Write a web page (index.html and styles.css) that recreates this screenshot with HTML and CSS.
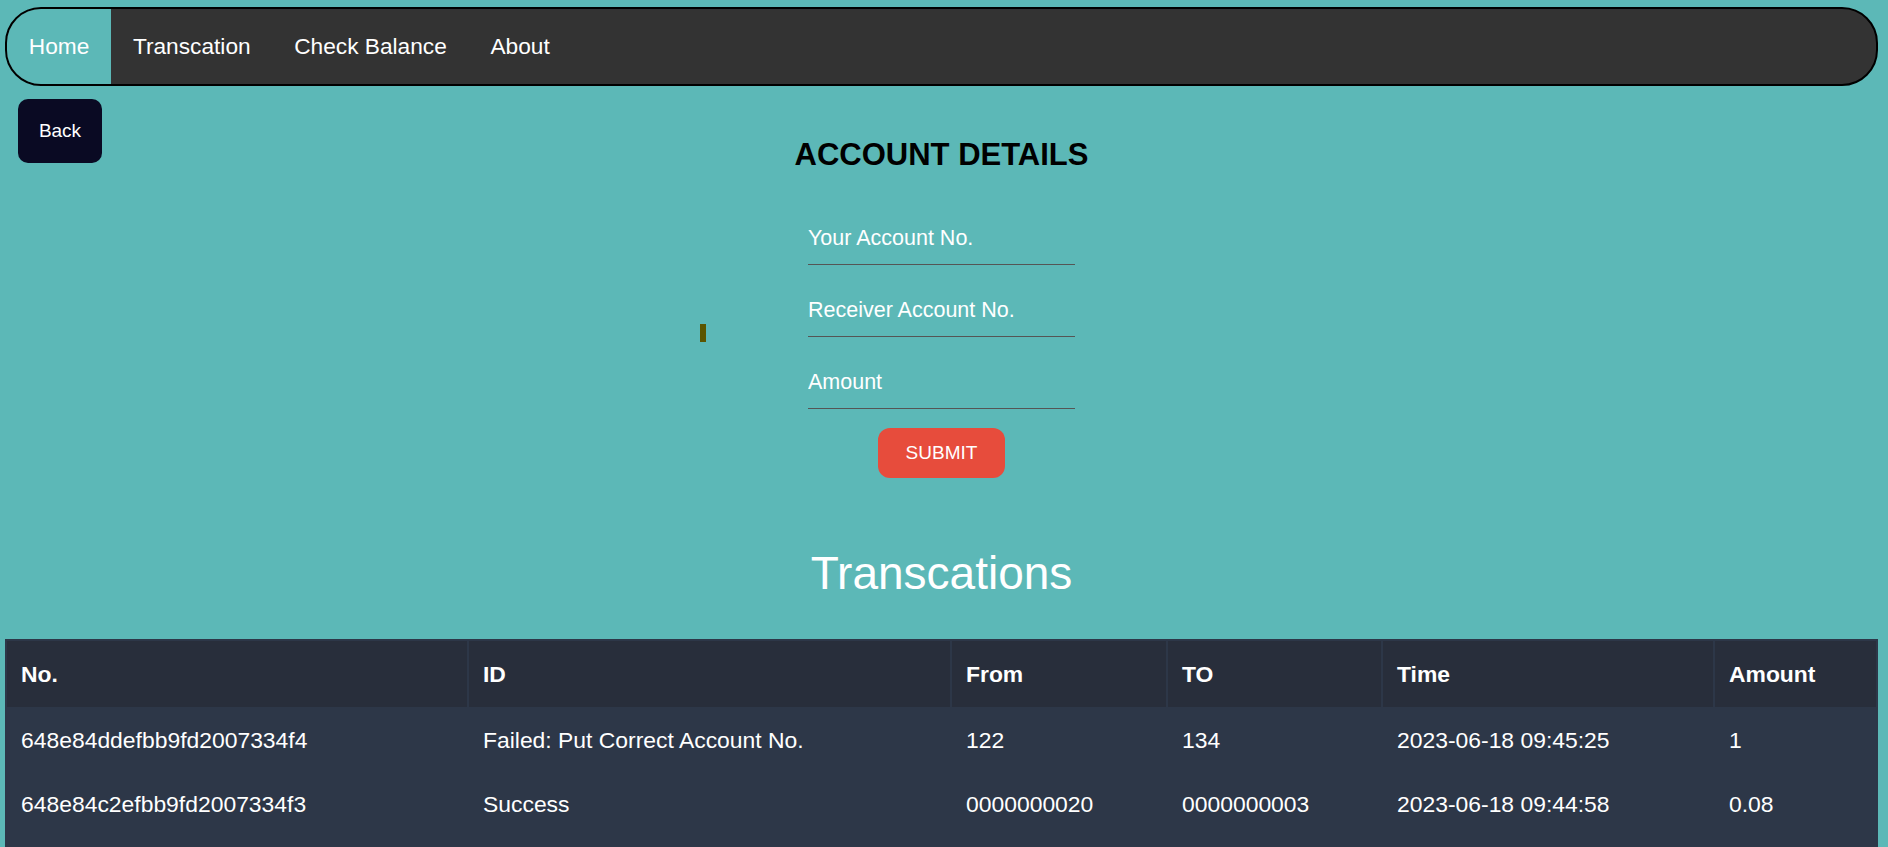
FILE: index.html
```html
<!DOCTYPE html>
<html lang="en">
<head>
<meta charset="utf-8">
<title>Bank</title>
<link rel="stylesheet" href="styles.css">
</head>
<body>
<div class="page">
  <nav class="navbar">
    <a class="nav-link active" href="#">Home</a>
    <a class="nav-link" href="#">Transcation</a>
    <a class="nav-link" href="#">Check Balance</a>
    <a class="nav-link" href="#">About</a>
  </nav>

  <div class="top">
    <button class="back">Back</button>
    <section class="transfer">
      <h2 class="transfer-title">ACCOUNT DETAILS</h2>
      <form class="transfer-form">
        <span class="marker"></span>
        <input class="field" type="text" placeholder="Your Account No.">
        <input class="field" type="text" placeholder="Receiver Account No.">
        <input class="field" type="text" placeholder="Amount">
        <button class="submit" type="button">SUBMIT</button>
      </form>
    </section>
  </div>

  <h1 class="tx-title">Transcations</h1>

  <table class="tx-table">
    <colgroup>
      <col class="c1"><col class="c2"><col class="c3"><col class="c4"><col class="c5"><col class="c6">
    </colgroup>
    <thead>
      <tr><th>No.</th><th>ID</th><th>From</th><th>TO</th><th>Time</th><th>Amount</th></tr>
    </thead>
    <tbody>
      <tr><td>648e84ddefbb9fd2007334f4</td><td>Failed: Put Correct Account No.</td><td>122</td><td>134</td><td>2023-06-18 09:45:25</td><td>1</td></tr>
      <tr><td>648e84c2efbb9fd2007334f3</td><td>Success</td><td>0000000020</td><td>0000000003</td><td>2023-06-18 09:44:58</td><td>0.08</td></tr>
      <tr><td>&nbsp;</td><td></td><td></td><td></td><td></td><td></td></tr>
    </tbody>
  </table>
</div>
</body>
</html>
```

FILE: styles.css
```css
* { box-sizing: border-box; }

html, body {
  margin: 0;
  padding: 0;
  background: #5cb8b7;
}

body {
  font-family: "Liberation Sans", Arial, sans-serif;
  color: #fff;
}

.page {
  padding: 7px 10px 0 5px;
}

/* navbar */
.navbar {
  display: flex;
  height: 79px;
  background: #333333;
  border: 2px solid #000;
  border-radius: 36px;
  overflow: hidden;
}

.nav-link {
  display: flex;
  align-items: center;
  padding: 0 21.8px 1px;
  color: #fff;
  text-decoration: none;
  font-size: 22.7px;
  line-height: 26px;
}

.nav-link.active {
  background: #5cb8b7;
}

/* top area */
.top {
  display: grid;
  grid-template-columns: 1fr auto 1fr;
}

.back {
  grid-column: 1;
  justify-self: start;
  align-self: start;
  margin: 13px 0 0 13px;
  width: 84px;
  height: 64px;
  background: #0a0a23;
  color: #fff;
  border: none;
  border-radius: 10px;
  font-family: "Liberation Sans", Arial, sans-serif;
  font-size: 19px;
  padding: 0;
}

.transfer {
  grid-column: 2;
  display: flex;
  flex-direction: column;
  align-items: center;
}

.transfer-title {
  margin: 51px 0 0;
  font-size: 31px;
  font-weight: bold;
  color: #000;
  line-height: 35px;
}

.transfer-form {
  position: relative;
  display: flex;
  flex-direction: column;
  align-items: center;
  width: 267px;
  margin: 41px 0 0;
}

.marker {
  position: absolute;
  left: -108px;
  top: 111px;
  width: 6px;
  height: 18px;
  background: #5b5500;
}

.field {
  display: block;
  width: 267px;
  margin: 0 0 20px;
  padding: 13px 0 14px;
  font-family: "Liberation Sans", Arial, sans-serif;
  font-size: 21.5px;
  line-height: 24px;
  color: #fff;
  background: transparent;
  border: none;
  border-bottom: 1px solid #555;
  outline: none;
}

.field:last-of-type {
  margin-bottom: 19px;
}

.field::placeholder {
  color: #fff;
  opacity: 1;
}

.submit {
  padding: 14px 27.5px;
  font-family: "Liberation Sans", Arial, sans-serif;
  font-size: 19px;
  line-height: 22px;
  color: #fff;
  background: #e74c3c;
  border: none;
  border-radius: 12px;
}

/* transactions */
.tx-title {
  margin: 69px 0 40px;
  text-align: center;
  font-size: 46px;
  font-weight: normal;
  line-height: 52px;
  color: #fff;
}

.tx-table {
  width: 100%;
  table-layout: fixed;
  border-collapse: separate;
  border-spacing: 2px;
  background: #2d3748;
  font-size: 22.9px;
  line-height: 26px;
}

.c1 { width: 460px; }
.c2 { width: 481px; }
.c3 { width: 214px; }
.c4 { width: 213px; }
.c5 { width: 330px; }
.c6 { width: 161px; }

.tx-table th {
  text-align: left;
  font-weight: bold;
  padding: 20px 14px;
  background: #282e3b;
  color: #fff;
}

.tx-table td {
  padding: 18px 14px;
  color: #fff;
  white-space: nowrap;
}
```
